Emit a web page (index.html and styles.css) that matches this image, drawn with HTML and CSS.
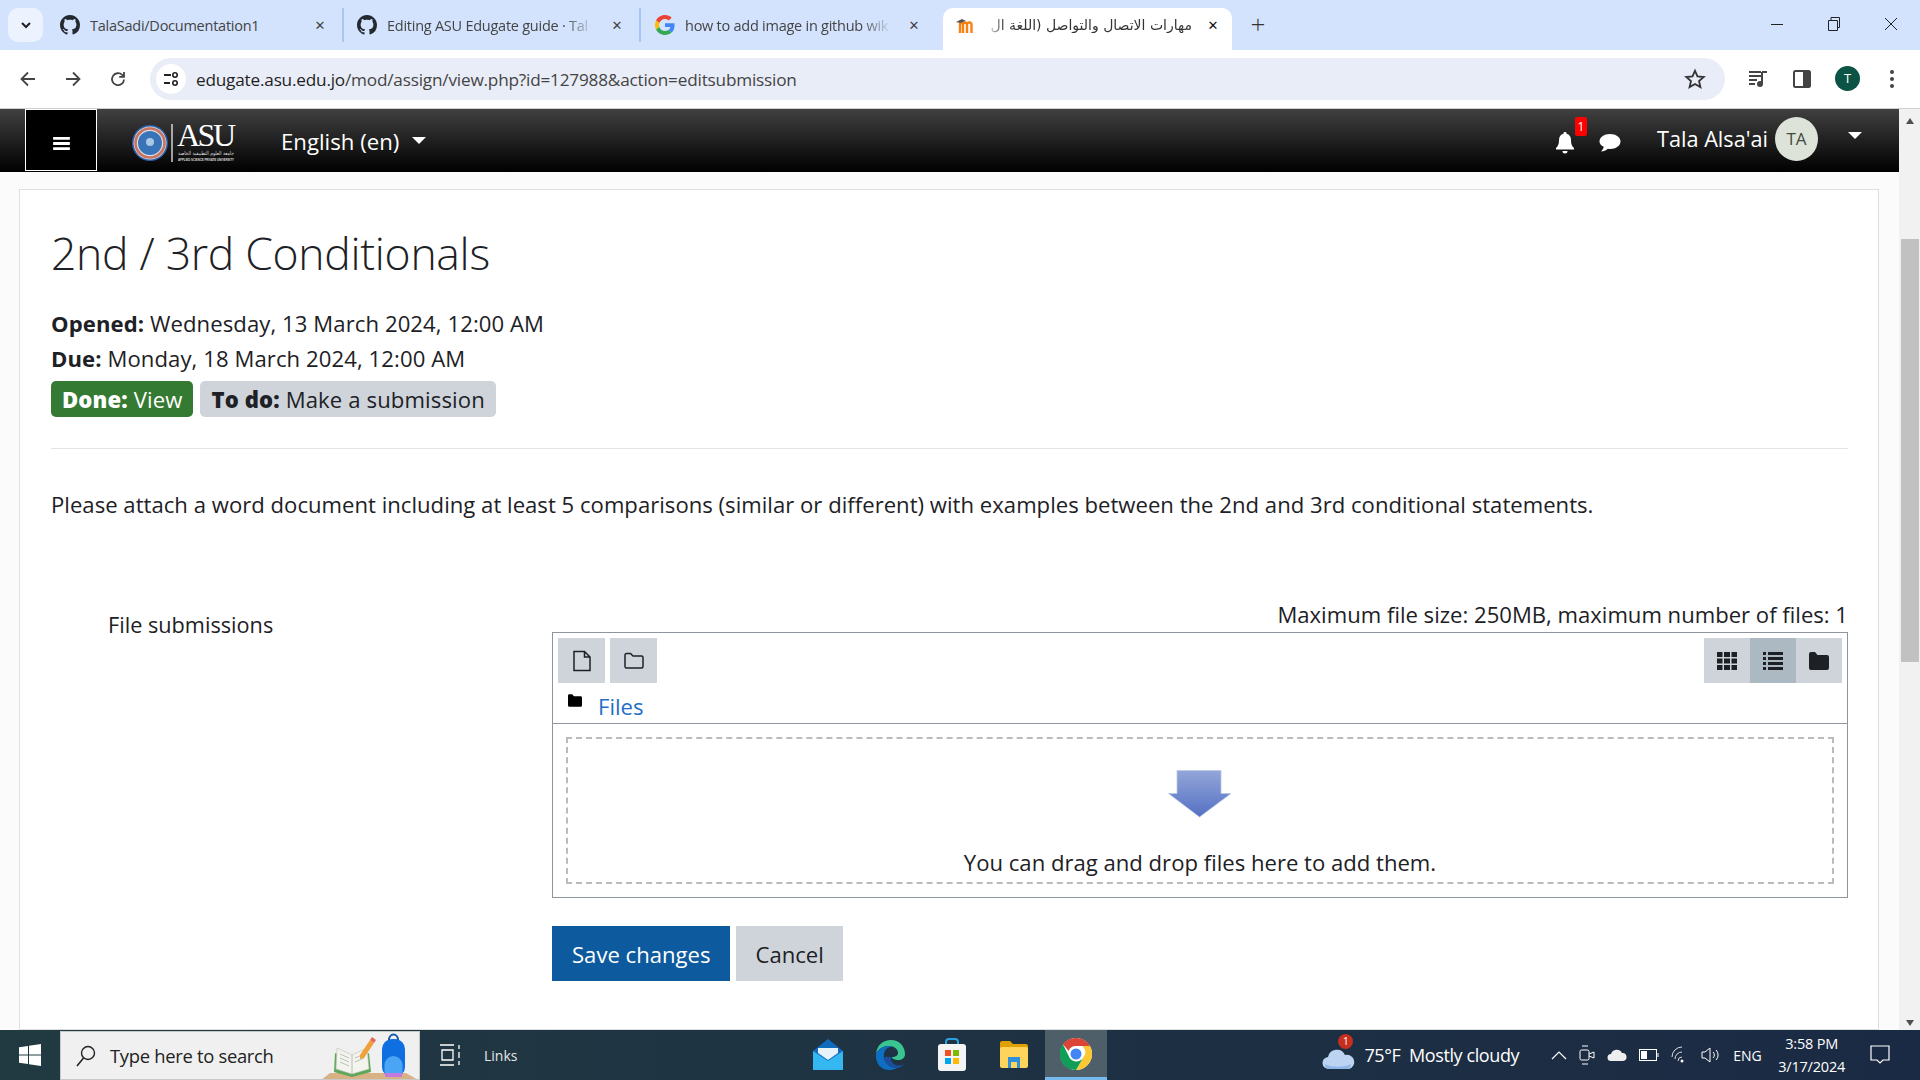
FILE: index.html
```html
<!DOCTYPE html>
<html lang="en"><head>
<title>2nd / 3rd Conditionals</title>
<meta charset="UTF-8">
<link rel="stylesheet" href="styles.css">
</head>
<body>

<!-- browser tabs -->
<div class="tabstrip">
  <div class="tabsearch"><svg width="12" height="12" viewBox="0 0 12 12"><path d="M2 4l4 4 4-4" fill="none" stroke="#1f1f1f" stroke-width="2"/></svg></div>
  <div class="tab">
    <svg class="favicon" viewBox="0 0 16 16"><path fill="#24292f" d="M8 0C3.58 0 0 3.58 0 8c0 3.54 2.29 6.53 5.47 7.59.4.07.55-.17.55-.38 0-.19-.01-.82-.01-1.49-2.01.37-2.53-.49-2.69-.94-.09-.23-.48-.94-.82-1.13-.28-.15-.68-.52-.01-.53.63-.01 1.08.58 1.23.82.72 1.21 1.87.87 2.33.66.07-.52.28-.87.51-1.07-1.78-.2-3.64-.89-3.64-3.95 0-.87.31-1.59.82-2.15-.08-.2-.36-1.02.08-2.12 0 0 .67-.21 2.2.82.64-.18 1.32-.27 2-.27s1.36.09 2 .27c1.53-1.04 2.2-.82 2.2-.82.44 1.1.16 1.92.08 2.12.51.56.82 1.27.82 2.15 0 3.07-1.87 3.75-3.65 3.95.29.25.54.73.54 1.48 0 1.07-.01 1.93-.01 2.2 0 .21.15.46.55.38A8.01 8.01 0 0 0 16 8c0-4.42-3.58-8-8-8z"/></svg>
    <span class="tabtitle">TalaSadi/Documentation1</span>
    <span class="tabclose">✕</span>
  </div>
  <div class="tab">
    <svg class="favicon" viewBox="0 0 16 16"><path fill="#24292f" d="M8 0C3.58 0 0 3.58 0 8c0 3.54 2.29 6.53 5.47 7.59.4.07.55-.17.55-.38 0-.19-.01-.82-.01-1.49-2.01.37-2.53-.49-2.69-.94-.09-.23-.48-.94-.82-1.13-.28-.15-.68-.52-.01-.53.63-.01 1.08.58 1.23.82.72 1.21 1.87.87 2.33.66.07-.52.28-.87.51-1.07-1.78-.2-3.64-.89-3.64-3.95 0-.87.31-1.59.82-2.15-.08-.2-.36-1.02.08-2.12 0 0 .67-.21 2.2.82.64-.18 1.32-.27 2-.27s1.36.09 2 .27c1.53-1.04 2.2-.82 2.2-.82.44 1.1.16 1.92.08 2.12.51.56.82 1.27.82 2.15 0 3.07-1.87 3.75-3.65 3.95.29.25.54.73.54 1.48 0 1.07-.01 1.93-.01 2.2 0 .21.15.46.55.38A8.01 8.01 0 0 0 16 8c0-4.42-3.58-8-8-8z"/></svg>
    <span class="tabtitle fade">Editing ASU Edugate guide · Tal</span>
    <span class="tabclose">✕</span>
  </div>
  <div class="tab lasttab">
    <svg class="favicon" viewBox="0 0 48 48"><path fill="#EA4335" d="M24 9.5c3.5 0 6.700 1.200 9.200 3.600l6.900-6.900C35.900 2.400 30.500 0 24 0 14.600 0 6.500 5.400 2.600 13.200l8 6.200C12.500 13.700 17.800 9.500 24 9.500z"/><path fill="#4285F4" d="M46.900 24.500c0-1.600-.1-3.100-.4-4.500H24v9h12.900c-.6 3-2.200 5.500-4.700 7.200l7.700 6c4.500-4.200 7-10.300 7-17.700z"/><path fill="#FBBC05" d="M10.500 28.600c-.5-1.400-.8-3-.8-4.600s.3-3.200.8-4.600l-8-6.200C.9 16.500 0 20.100 0 24s.9 7.500 2.600 10.800l7.900-6.200z"/><path fill="#34A853" d="M24 48c6.500 0 11.900-2.100 15.900-5.800l-7.700-6c-2.200 1.400-4.900 2.300-8.200 2.300-6.200 0-11.500-4.200-13.400-9.900l-8 6.200C6.500 42.600 14.600 48 24 48z"/></svg>
    <span class="tabtitle fade">how to add image in github wik</span>
    <span class="tabclose">✕</span>
  </div>
  <div class="tab activetab">
    <svg class="favicon" viewBox="0 0 20 20"><path d="M5 18V9.500c0-2 3-2 3 0V18M8 18V9.500c0-2 3.500-2.500 4-.5V18M12 18V9.500c0-3 4.500-2.500 4.500 0V18" fill="none" stroke="#f98012" stroke-width="2.400"/><path d="M1 7l6-3 4 2-6 2z" fill="#555"/></svg>
    <span class="tabtitle arabic fadeleft" dir="rtl">مهارات الاتصال والتواصل (اللغة ال</span>
    <span class="tabclose dark">✕</span>
  </div>
  <div class="newtab">+</div>
  <div class="winctl">
    <svg width="14" height="14" viewBox="0 0 14 14"><path d="M1 7.500h12" stroke="#222" stroke-width="1"/></svg>
    <svg width="14" height="14" viewBox="0 0 14 14"><path d="M1.500 3.500h9v10h-9zM4 3.500v-3h8.500v10h-2" fill="none" stroke="#222"/></svg>
    <svg width="14" height="14" viewBox="0 0 14 14"><path d="M1 1l12 12M13 1L1 13" stroke="#222"/></svg>
  </div>
</div>

<!-- address bar -->
<div class="toolbar">
  <svg class="navicon" viewBox="0 0 20 20"><path d="M17 10H4M10 3.500L3.500 10l6.500 6.500" fill="none" stroke="#444" stroke-width="1.800"/></svg>
  <svg class="navicon" viewBox="0 0 20 20"><path d="M3 10h13M10 3.500l6.500 6.500-6.500 6.500" fill="none" stroke="#444" stroke-width="1.800"/></svg>
  <svg class="navicon" viewBox="0 0 20 20"><path d="M16 10.500a6 6 0 1 1-1.800-4.600L16 7.500M16 3v4.800h-4.800" fill="none" stroke="#444" stroke-width="1.800"/></svg>
  <div class="omnibox">
    <span class="siteinfo"><svg width="18" height="18" viewBox="0 0 18 18"><path d="M2 5h7M2 13h6" stroke="#222" stroke-width="2"/><circle cx="13" cy="5" r="2.200" fill="none" stroke="#222" stroke-width="1.600"/><circle cx="13" cy="13" r="2.200" fill="none" stroke="#222" stroke-width="1.600"/></svg></span>
    <span class="url">edugate.asu.edu.jo<span class="urlpath">/mod/assign/view.php?id=127988&amp;action=editsubmission</span></span>
    <svg class="star" width="22" height="22" viewBox="0 0 24 24"><path d="M12 3l2.700 6.200 6.800.6-5.100 4.500 1.500 6.600L12 17.400l-5.900 3.500 1.500-6.600-5.100-4.500 6.800-.6z" fill="none" stroke="#333" stroke-width="2"/></svg>
  </div>
  <div class="toolicons">
    <svg width="22" height="22" viewBox="0 0 22 22"><path d="M2 4h12M2 8h12M2 12h8M2 16h6" stroke="#444" stroke-width="2"/><path d="M15 4h5M15 4v11" stroke="#444" stroke-width="2"/><circle cx="13" cy="16" r="3" fill="#444"/></svg>
    <svg width="22" height="22" viewBox="0 0 22 22"><rect x="3" y="3" width="16" height="16" rx="1.500" fill="none" stroke="#444" stroke-width="2"/><rect x="12" y="3" width="7" height="16" fill="#444"/></svg>
    <span class="profile">T</span>
    <svg class="menudots" width="6" height="20" viewBox="0 0 6 20"><circle cx="3" cy="3" r="2" fill="#444"/><circle cx="3" cy="10" r="2" fill="#444"/><circle cx="3" cy="17" r="2" fill="#444"/></svg>
  </div>
</div>

<div class="viewport">
  <div class="site">
    <div class="navbar">
      <button class="burger"><svg width="17" height="13" viewBox="0 0 18 14"><path d="M0 1.500h18M0 7h18M0 12.500h18" stroke="#fff" stroke-width="3"/></svg></button>
      <svg class="logo" width="104" height="42" viewBox="0 0 104 42">
        <circle cx="18" cy="21" r="18" fill="#2a5ea8"/>
        <circle cx="18" cy="21" r="16.500" fill="#d9dde6"/>
        <circle cx="18" cy="21" r="14.500" fill="none" stroke="#c9735f" stroke-width="2.600"/>
        <circle cx="18" cy="21" r="12" fill="#3a74b8"/>
        <circle cx="18" cy="20" r="4" fill="#a9c8e6"/>
        <path d="M40 2v38" stroke="#fff" stroke-width="1.200"/>
        <text x="45" y="24" class="logotext">ASU</text>
        <text x="46" y="32.500" class="logosub" textLength="56" lengthAdjust="spacingAndGlyphs">جامعة العلوم التطبيقية الخاصة</text>
        <text x="46" y="39" class="logotiny" textLength="56" lengthAdjust="spacingAndGlyphs">APPLIED SCIENCE PRIVATE UNIVERSITY</text>
      </svg>
      <span class="lang">English (en)</span>
      <span class="caret"></span>
      <div class="usermenu">
        <span class="bell">
          <svg width="20" height="22" viewBox="0 0 20 22"><path d="M10 0a1.500 1.500 0 0 1 1.500 1.800C14.500 2.500 16 5 16 8c0 5 1.500 6.500 3 8v1.500H1V16c1.500-1.500 3-3 3-8 0-3 1.500-5.500 4.500-6.200A1.500 1.500 0 0 1 10 0zM7.500 19h5a2.500 2.500 0 0 1-5 0z" fill="#fff"/></svg>
          <span class="notecount">1</span>
        </span>
        <svg class="chat" width="24" height="22" viewBox="0 0 24 22"><path d="M12 2c6 0 10.500 3.300 10.500 7.500S18 17 12 17c-.8 0-1.500 0-2.200-.2C8 18.500 5.500 19.500 3 19.500c1.500-1.500 2.500-3 2.700-4.700C3 13.500 1.500 11.600 1.500 9.500 1.500 5.300 6 2 12 2z" fill="#fff"/></svg>
        <span class="username">Tala Alsa'ai</span>
        <span class="avatar">TA</span>
        <span class="caret usercaret"></span>
      </div>
    </div>

    <div class="page">
      <div class="card">
        <h2 class="title">2nd / 3rd Conditionals</h2>
        <div class="dates">
          <div><b>Opened:</b> Wednesday, 13 March 2024, 12:00 AM</div>
          <div><b>Due:</b> Monday, 18 March 2024, 12:00 AM</div>
        </div>
        <div class="badges">
          <span class="badge done"><b>Done:</b> View</span>
          <span class="badge todo"><b>To do:</b> Make a submission</span>
        </div>
        <hr class="rule">
        <p class="intro">Please attach a word document including at least 5 comparisons (similar or different) with examples between the 2nd and 3rd conditional statements.</p>

        <div class="formrow">
          <div class="fieldlabel">File submissions</div>
          <div class="field">
            <div class="limits">Maximum file size: 250MB, maximum number of files: 1</div>
            <div class="filemanager">
              <div class="fmtop">
                <div class="fmbar">
                  <span class="fmbtn"><svg width="18" height="22" viewBox="0 0 18 22"><path d="M1 1.500h10.500L17 7v13.500H1zM11.500 1.500V7H17" fill="none" stroke="#1d2125" stroke-width="1.500"/></svg></span>
                  <span class="fmbtn"><svg width="20" height="18" viewBox="0 0 20 18"><path d="M1 3a1.500 1.500 0 0 1 1.500-1.500h4L9 4h8.500A1.500 1.500 0 0 1 19 5.500v9a1.500 1.500 0 0 1-1.500 1.500h-15A1.500 1.500 0 0 1 1 14.500z" fill="none" stroke="#1d2125" stroke-width="1.500"/></svg></span>
                  <div class="fmviews">
                    <span class="viewbtn"><svg width="20" height="20" viewBox="0 0 20 20"><path d="M0 1h5.500v5H0zM7 1h6v5H7zM14.500 1H20v5h-5.500zM0 7.500h5.500v5H0zM7 7.500h6v5H7zM14.500 7.500H20v5h-5.500zM0 14h5.500v5H0zM7 14h6v5H7zM14.500 14H20v5h-5.500z" fill="#1d2125"/></svg></span>
                    <span class="viewbtn on"><svg width="20" height="20" viewBox="0 0 20 20"><path d="M0 1h3v3H0zM5 1h15v3H5zM0 6h3v3H0zM5 6h15v3H5zM0 11h3v3H0zM5 11h15v3H5zM0 16h3v3H0zM5 16h15v3H5z" fill="#1d2125"/></svg></span>
                    <span class="viewbtn"><svg width="20" height="20" viewBox="0 0 20 20"><path d="M0 3a2 2 0 0 1 2-2h4l2.500 3H18a2 2 0 0 1 2 2v11a2 2 0 0 1-2 2H2a2 2 0 0 1-2-2z" fill="#1d2125"/></svg></span>
                  </div>
                </div>
                <div class="crumb">
                  <svg width="14" height="13" viewBox="0 0 20 18"><path d="M0 2a2 2 0 0 1 2-2h4l2.500 3H18a2 2 0 0 1 2 2v11a2 2 0 0 1-2 2H2a2 2 0 0 1-2-2z" fill="#000"/></svg>
                  <a class="filelink" href="#">Files</a>
                </div>
              </div>
              <div class="dropwrap">
                <div class="dropzone">
                  <svg width="64" height="50" viewBox="0 0 64 50">
                    <defs><linearGradient id="arrowfill" x1="0" y1="0" x2="0" y2="1"><stop offset="0" stop-color="#93a6d8"/><stop offset="1" stop-color="#5470c4"/></linearGradient></defs>
                    <path d="M9 .5h44v23h10L31.500 47 .5 23.500H9z" fill="url(#arrowfill)" stroke="#b9c6e6" stroke-width=".8"/>
                  </svg>
                  <div class="droptext">You can drag and drop files here to add them.</div>
                </div>
              </div>
            </div>
          </div>
        </div>

        <div class="actions">
          <button class="btn primary">Save changes</button>
          <button class="btn secondary">Cancel</button>
        </div>
      </div>
    </div>
  </div>

  <div class="scrollbar">
    <span class="arrowup"></span>
    <span class="thumb"></span>
    <span class="arrowdown"></span>
  </div>
</div>

<!-- windows taskbar -->
<div class="taskbar">
  <div class="startbtn"><svg width="22" height="22" viewBox="0 0 22 22"><path d="M0 3.200l9-1.300v8.600H0zM10 1.800L22 0v10.500H10zM0 11.500h9v8.600l-9-1.300zM10 11.500h12V22l-12-1.800z" fill="#fff"/></svg></div>
  <div class="searchbox">
    <svg width="24" height="24" viewBox="0 0 24 24"><circle cx="14" cy="9" r="6.500" fill="none" stroke="#222" stroke-width="1.400"/><path d="M9.500 14L3 22" stroke="#222" stroke-width="1.600"/></svg>
    <span class="searchtext">Type here to search</span>
    <svg class="searchart" width="100" height="50" viewBox="0 0 100 50">
      <path d="M0 50l10-8h76l14 8z" fill="#d8b184"/>
      <path d="M15 22l17 8 17-8 2 19-19 5-18-5z" fill="#5da65a"/>
      <path d="M17 17l15 7 15-7 2 21-17 5-16-5z" fill="#f4f4ee" stroke="#b9c0b5" stroke-width=".6"/>
      <path d="M32 24v19M20 23l9 4M20 27l9 4M20 31l9 4M35 27l9-4M35 31l9-4" stroke="#aab0a8" stroke-width=".8"/>
      <path d="M40 24l10-15 4 3-10 15-4 1z" fill="#f0a13a"/>
      <path d="M50 9l2-3 4 3-2 3z" fill="#e2685c"/>
      <rect x="62" y="8" width="23" height="38" rx="10" fill="#0f6fe0"/>
      <path d="M69 9a4.500 5.500 0 0 1 9 0" fill="none" stroke="#1557ad" stroke-width="2"/>
      <path d="M64.500 34a9 9 0 0 1 18 0v8h-18z" fill="#4aa6f5"/>
      <path d="M65 42h17v4H65z" fill="#c47be0"/>
    </svg>
  </div>
  <svg class="taskview" width="22" height="24" viewBox="0 0 22 24"><path d="M0 2h14M0 22h14M2 7h11v10H2zM19 2v4M19 9v6M19 18v4" fill="none" stroke="#fff" stroke-width="1.300"/></svg>
  <span class="linksbar">Links</span>
  <div class="pinned">
    <span class="pin"><svg width="32" height="32" viewBox="0 0 32 32"><path d="M1 12L16 0l15 12v19H1z" fill="#0f6cbd"/><path d="M1 12l15 10 15-10v19H1z" fill="#35b8f1"/><path d="M6 9h20v5l-10 7-10-7z" fill="#e8f2fb"/></svg></span>
    <span class="pin"><svg width="32" height="32" viewBox="0 0 32 32"><path d="M2 15C3 6 9 1 17 1c8 0 14 6 14 14 0 4-3 6-7 6-3 0-6-1-6-3 4 0 6-2 6-4 0-4-4-7-9-7C9 7 4 10 2 15z" fill="#38c58f"/><path d="M2 15c2-5 7-8 13-8 2 0 3 .4 3 .4C12 8 9 13 10 19c1 6 7 10 13 10 0 0-3 2-8 2C7 31 1 24 2 15z" fill="#0d6ec2"/><path d="M10 19c1 6 7 10 13 10 3 0 6-2 7-4-3 2-7 2-10 0-3-2-4-5-2-7-3 0-7-1-8 1z" fill="#1a4f9d"/></svg></span>
    <span class="pin"><svg width="32" height="34" viewBox="0 0 32 34"><path d="M10 7V4a3 3 0 0 1 3-3h6a3 3 0 0 1 3 3v3" fill="none" stroke="#2aa0e0" stroke-width="2"/><rect x="2" y="6" width="28" height="27" rx="3" fill="#f4f4f4"/><rect x="9" y="12" width="6" height="6" fill="#f25022"/><rect x="17" y="12" width="6" height="6" fill="#7fba00"/><rect x="9" y="20" width="6" height="6" fill="#00a4ef"/><rect x="17" y="20" width="6" height="6" fill="#ffb900"/></svg></span>
    <span class="pin"><svg width="30" height="28" viewBox="0 0 30 28"><path d="M1 2a2 2 0 0 1 2-2h8l3 3h13a2 2 0 0 1 2 2v4H1z" fill="#e0a100"/><rect x="1" y="6" width="28" height="21" rx="2" fill="#ffd45c"/><path d="M9 27V16h12v11h-3v-6h-6v6z" fill="#2f8fd8"/></svg></span>
    <span class="pin running"><svg width="32" height="32" viewBox="0 0 48 48"><circle cx="24" cy="24" r="24" fill="#fff"/><path d="M24 0a24 24 0 0 1 20.800 12H24a12 12 0 0 0-11.200 7.600L4.400 9.500A24 24 0 0 1 24 0z" fill="#db4437"/><path d="M44.800 12A24 24 0 0 1 24 48l10.400-18a12 12 0 0 0-1-18z" fill="#fcc934"/><path d="M4.400 9.500L14.600 30a12 12 0 0 0 19.800 0L24 48A24 24 0 0 1 4.400 9.500z" fill="#0f9d58"/><circle cx="24" cy="24" r="9.500" fill="#4285f4" stroke="#fff" stroke-width="2.500"/></svg></span>
  </div>
  <div class="weather">
    <span class="weathericon">
      <svg width="34" height="26" viewBox="0 0 34 26"><path d="M7 25a6 6 0 0 1-1-12 9 9 0 0 1 17-2 7 7 0 0 1 4 14z" fill="#bcd4f2"/><path d="M3 20c3 3 20 4 26 0 0 3-2 5-4 5H7c-2 0-4-2-4-5z" fill="#8fb6e8"/></svg>
      <span class="weatherbadge">1</span>
    </span>
    <span class="weathertext">75°F&nbsp; Mostly cloudy</span>
  </div>
  <div class="tray">
    <svg width="16" height="10" viewBox="0 0 16 10"><path d="M1 9l7-7 7 7" fill="none" stroke="#fff" stroke-width="1.200"/></svg>
    <svg width="16" height="20" viewBox="0 0 16 20"><rect x="1" y="5" width="9" height="10" rx="1.500" fill="none" stroke="#fff"/><path d="M10 9l5-2v6l-5-2M3 1h6M3 19h6" fill="none" stroke="#fff"/></svg>
    <svg width="20" height="14" viewBox="0 0 20 14"><path d="M4 13a3.500 3.500 0 0 1 0-7 6 6 0 0 1 11-1 4 4 0 0 1 1 8z" fill="#eee"/></svg>
    <svg width="20" height="12" viewBox="0 0 20 12"><rect x=".5" y=".5" width="17" height="11" fill="none" stroke="#fff"/><rect x="2" y="2" width="6" height="8" fill="#fff"/><path d="M19 4v4" stroke="#fff"/></svg>
    <svg width="18" height="18" viewBox="0 0 18 18"><path d="M1 11a10 10 0 0 1 10-10M4 13a7 7 0 0 1 7-7M7 15a4 4 0 0 1 4-4" fill="none" stroke="#ddd"/><circle cx="11" cy="15" r="1.500" fill="#fff"/></svg>
    <svg width="20" height="18" viewBox="0 0 20 18"><path d="M1 6h3l5-4v14l-5-4H1zM12 6a4 4 0 0 1 0 6M15 4a7 7 0 0 1 0 10" fill="none" stroke="#fff"/></svg>
    <span class="traylang">ENG</span>
  </div>
  <div class="clock"><span>3:58 PM</span><span>3/17/2024</span></div>
  <svg class="actioncenter" width="20" height="20" viewBox="0 0 20 20"><path d="M1 1h18v14h-6l-3 3-3-3H1z" fill="none" stroke="#fff" stroke-width="1.200"/></svg>
</div>

</body></html>
```

FILE: styles.css
```css
html, body { margin: 0; height: 100%; }
body {
  width: 1920px;
  height: 1080px;
  overflow: hidden;
  display: flex;
  flex-direction: column;
  font-family: "Open Sans", "Noto Sans", sans-serif;
  color: #1d2125;
  background: #fff;
}

/* tab strip */
.tabstrip {
  height: 50px;
  flex: none;
  display: flex;
  background: #d3e3fd;
  padding-left: 8px;
  box-sizing: border-box;
}
.tabsearch {
  width: 35px;
  height: 34px;
  margin-top: 8px;
  border-radius: 10px;
  background: #ecf2fe;
  display: flex;
  align-items: center;
  justify-content: center;
  margin-right: 4px;
  flex: none;
}
.tab {
  width: 297px;
  height: 34px;
  margin-top: 8px;
  flex: none;
  box-sizing: border-box;
  display: flex;
  align-items: center;
  padding: 0 12px 0 13px;
  border-right: 2px solid #a9c6f2;
  font-size: 14.500px;
  color: #444;
}
.favicon { width: 20px; height: 20px; flex: none; margin-right: 10px; }
.tabtitle { flex: 1; white-space: nowrap; overflow: hidden; letter-spacing: -.25px; margin-right: 12px; }
.fade {
  -webkit-mask-image: linear-gradient(to right, #000 85%, transparent 100%);
  mask-image: linear-gradient(to right, #000 85%, transparent 100%);
}
.fadeleft {
  -webkit-mask-image: linear-gradient(to left, #000 90%, transparent 100%);
  mask-image: linear-gradient(to left, #000 90%, transparent 100%);
}
.tabclose { width: 20px; flex: none; text-align: center; font-size: 13px; color: #444; font-family: "DejaVu Sans", sans-serif; }
.tabclose.dark { color: #111; }
.lasttab { border-right: none; width: 297px; padding: 0 14px 0 14px; }
.activetab {
  width: 289px;
  height: 42px;
  margin-left: 5px;
  background: #fff;
  border: none;
  border-radius: 10px 10px 0 0;
  color: #333;
  padding: 0 9px 8px 12px;
}
.arabic { font-family: "DejaVu Sans", sans-serif; font-size: 14px; letter-spacing: 0; margin-right: 11px; }
.newtab {
  margin: 4px 0 0 16px;
  width: 20px;
  font-size: 26px;
  font-weight: 300;
  line-height: 40px;
  text-align: center;
  color: #333;
}
.winctl {
  margin-left: auto;
  display: flex;
  gap: 43px;
  padding: 17px 22px 0 0;
}

/* address bar */
.toolbar {
  height: 59px;
  flex: none;
  box-sizing: border-box;
  display: flex;
  align-items: center;
  background: #fff;
  border-bottom: 1px solid #cfcfcf;
  padding: 0 0 1px 18px;
  border-top-left-radius: 8px;
  border-top-right-radius: 8px;
}
.navicon { width: 20px; height: 20px; margin-right: 25px; flex: none; }
.navicon:nth-child(3) { margin-right: 22px; }
.omnibox {
  width: 1575px;
  height: 42px;
  border-radius: 21px;
  background: #e9edf7;
  display: flex;
  align-items: center;
  padding: 0 19px 0 6px;
  box-sizing: border-box;
  flex: none;
}
.siteinfo {
  width: 30px;
  height: 30px;
  border-radius: 50%;
  background: #fff;
  display: flex;
  align-items: center;
  justify-content: center;
  margin-right: 10px;
}
.url { font-size: 17.200px; letter-spacing: -.2px; color: #1f1f1f; margin-top: 1px; }
.urlpath { color: #444; }
.star { margin-left: auto; }
.toolicons {
  display: flex;
  align-items: center;
  gap: 22px;
  margin-left: 22px;
}
.menudots { margin-left: 7px; }
.profile {
  width: 25px;
  height: 25px;
  border-radius: 50%;
  background: #0b5345;
  color: #fff;
  font-size: 13px;
  text-align: center;
  line-height: 25px;
}

/* site + scrollbar */
.viewport { flex: 1; display: flex; min-height: 0; }
.site { flex: 1; display: flex; flex-direction: column; min-width: 0; }
.scrollbar {
  width: 21px;
  flex: none;
  background: #f1f1f1;
  display: flex;
  flex-direction: column;
  align-items: center;
  padding: 9px 0 4px;
  box-sizing: border-box;
}
.thumb { width: 18px; height: 423px; margin-top: 115px; background: #c1c1c1; }
.arrowup {
  width: 0; height: 0;
  border: 4.500px solid transparent;
  border-top: 0;
  border-bottom: 6px solid #505050;
}
.arrowdown {
  width: 0; height: 0;
  margin-top: auto;
  border: 4.500px solid transparent;
  border-bottom: 0;
  border-top: 6px solid #505050;
}

/* site header */
.navbar {
  height: 63px;
  flex: none;
  display: flex;
  align-items: center;
  background: linear-gradient(to bottom, #404040, #000);
  padding-left: 25px;
  box-sizing: border-box;
  color: #fff;
}
.burger {
  width: 72px;
  height: 62px;
  background: #000;
  border: 1px solid #fff;
  padding: 6px 0 0;
  display: flex;
  align-items: center;
  justify-content: center;
  margin-bottom: 1px;
}
.logo { margin: 4px 0 0 35px; overflow: visible; }
.logotext { font-family: "Liberation Serif", serif; font-size: 32px; fill: #fff; letter-spacing: -2.500px; }
.logosub { font-family: "DejaVu Sans", sans-serif; font-size: 5.500px; fill: #ddd; }
.logotiny { font-family: "Liberation Sans", sans-serif; font-size: 3px; fill: #ddd; font-weight: bold; }
.lang { margin: 2px 0 0 45px; font-size: 22.200px; }
.caret {
  width: 0; height: 0;
  border: 7px solid transparent;
  border-bottom: 0;
  border-top: 7px solid #fff;
  margin-left: 13px;
}
.usermenu { margin-left: auto; display: flex; align-items: center; height: 100%; }
.bell { position: relative; display: flex; margin-top: 5px; }
.notecount {
  position: absolute;
  left: 20px;
  top: -15px;
  width: 12px;
  height: 19px;
  background: #f00;
  border-radius: 2px;
  font-size: 12px;
  line-height: 19px;
  text-align: center;
  color: #fff;
}
.chat { margin: 5px 0 0 23px; }
.username { margin: -5px 0 0 35px; font-size: 21.700px; }
.avatar {
  width: 43px;
  height: 44px;
  margin: -3px 0 0 7px;
  border-radius: 50%;
  background: #dde3d8;
  color: #434a3e;
  font-size: 17px;
  font-weight: 500;
  text-align: center;
  line-height: 44px;
}
.usercaret { margin: -11px 37px 0 30px; }

/* page */
.page {
  flex: 1;
  min-height: 0;
  overflow: hidden;
  padding: 17px 20px 0 19px;
  background: #fbfbfb;
}
.card {
  height: 100%;
  box-sizing: border-box;
  background: #fff;
  border: 1px solid #dfdfdf;
  padding: 0 30px 0 31px;
}
.title {
  margin: 32px 0 0;
  font-size: 44.500px;
  font-weight: 300;
  line-height: 62px;
  letter-spacing: -.3px;
}
.dates { margin-top: 22px; font-size: 22.100px; line-height: 35px; letter-spacing: .09px; }
.dates b { font-weight: 700; }
.badges { display: flex; gap: 7px; margin-top: 5px; }
.badge {
  height: 36px;
  box-sizing: border-box;
  border-radius: 5px;
  padding: 0 11px;
  font-size: 22.100px;
  line-height: 36px;
  letter-spacing: .13px;
}
.badge b { font-weight: 800; }
.done { background: #357a32; color: #fff; }
.todo { background: #ced4da; }
.rule { margin: 31px 0 0; border: 0; border-top: 1px solid #e3e3e3; }
.intro { margin: 40px 0 0; font-size: 22.100px; line-height: 30px; white-space: nowrap; letter-spacing: .02px; }

.formrow { display: flex; margin-top: 80px; }
.fieldlabel { width: 501px; flex: none; padding: 11px 0 0 57px; box-sizing: border-box; font-size: 21.700px; line-height: 30px; }
.field { flex: 1; min-width: 0; }
.limits { text-align: right; font-size: 22.100px; line-height: 30px; }
.filemanager { border: 1px solid #8f959e; margin-top: 3px; height: 266px; box-sizing: border-box; display: flex; flex-direction: column; }
.fmtop { height: 91px; flex: none; box-sizing: border-box; border-bottom: 1px solid #8f959e; padding: 5px 5px 0 5px; }
.fmbar { display: flex; gap: 5px; }
.fmbtn, .viewbtn {
  height: 45px;
  width: 47px;
  background: #ced4da;
  display: flex;
  align-items: center;
  justify-content: center;
}
.fmviews { margin-left: auto; display: flex; }
.viewbtn { width: 46px; }
.viewbtn.on { background: #adb9c2; }
.crumb { display: flex; align-items: flex-start; gap: 16px; padding: 8px 0 0 10px; }
.crumb svg { margin-top: 3px; }
.filelink { font-size: 22.100px; line-height: 30px; color: #1f6fc8; text-decoration: none; }
.dropwrap { flex: 1; padding: 13px 13px 13px; }
.dropzone {
  height: 147px;
  box-sizing: border-box;
  border: 2px dashed #bbb;
  display: flex;
  flex-direction: column;
  align-items: center;
  padding-top: 31px;
}
.droptext { font-size: 22.100px; line-height: 30px; margin-top: 27px; }

.actions { display: flex; gap: 6px; margin: 28px 0 0 501px; }
.btn {
  height: 55px;
  border: 0;
  font-family: inherit;
  font-size: 22.100px;
}
.primary { background: #0e5a9e; color: #fff; padding: 0 20px; }
.secondary { background: #ced4da; color: #1d2125; padding: 0 19px; }

/* taskbar */
.taskbar {
  height: 50px;
  flex: none;
  display: flex;
  align-items: center;
  background: linear-gradient(to right, #213a42, #1b2a44);
  color: #fff;
}
.startbtn { width: 60px; display: flex; justify-content: center; flex: none; }
.searchbox {
  width: 360px;
  height: 49px;
  margin-top: 1px;
  flex: none;
  background: #f0f0f0;
  border: 1px solid #c8c8c8;
  box-sizing: border-box;
  display: flex;
  align-items: center;
  padding-left: 13px;
  color: #222;
  overflow: hidden;
}
.searchtext { margin: -1px 0 0 12px; font-size: 18.400px; letter-spacing: -.3px; }
.searchart { margin-left: auto; margin-right: -1px; flex: none; }
.taskview { margin-left: 20px; flex: none; }
.linksbar { margin-left: 22px; font-size: 14px; color: #e6e6e6; }
.pinned { margin-left: 280px; display: flex; align-items: center; }
.pin { width: 62px; height: 50px; display: flex; align-items: center; justify-content: center; box-sizing: border-box; }
.running { background: #4f5f6a; border-bottom: 3px solid #76b9ed; }
.weather { margin-left: 215px; display: flex; align-items: center; flex: none; }
.weathericon { position: relative; display: flex; margin-top: 4px; }
.weatherbadge {
  position: absolute;
  left: 16px;
  top: -10px;
  width: 15px;
  height: 15px;
  border-radius: 50%;
  background: #c62f1f;
  font-size: 10px;
  line-height: 15px;
  text-align: center;
}
.weathertext { margin-left: 8px; font-size: 18px; letter-spacing: -.4px; }
.tray { margin-left: 32px; display: flex; align-items: center; gap: 12px; flex: none; }
.traylang { font-size: 14px; margin-left: 0; }
.clock {
  margin-left: 14px;
  width: 72px;
  display: flex;
  flex-direction: column;
  align-items: center;
  gap: 5px;
  font-size: 14.500px;
  line-height: 18px;
  letter-spacing: -.2px;
  flex: none;
}
.actioncenter { margin-left: 22px; flex: none; }
```
